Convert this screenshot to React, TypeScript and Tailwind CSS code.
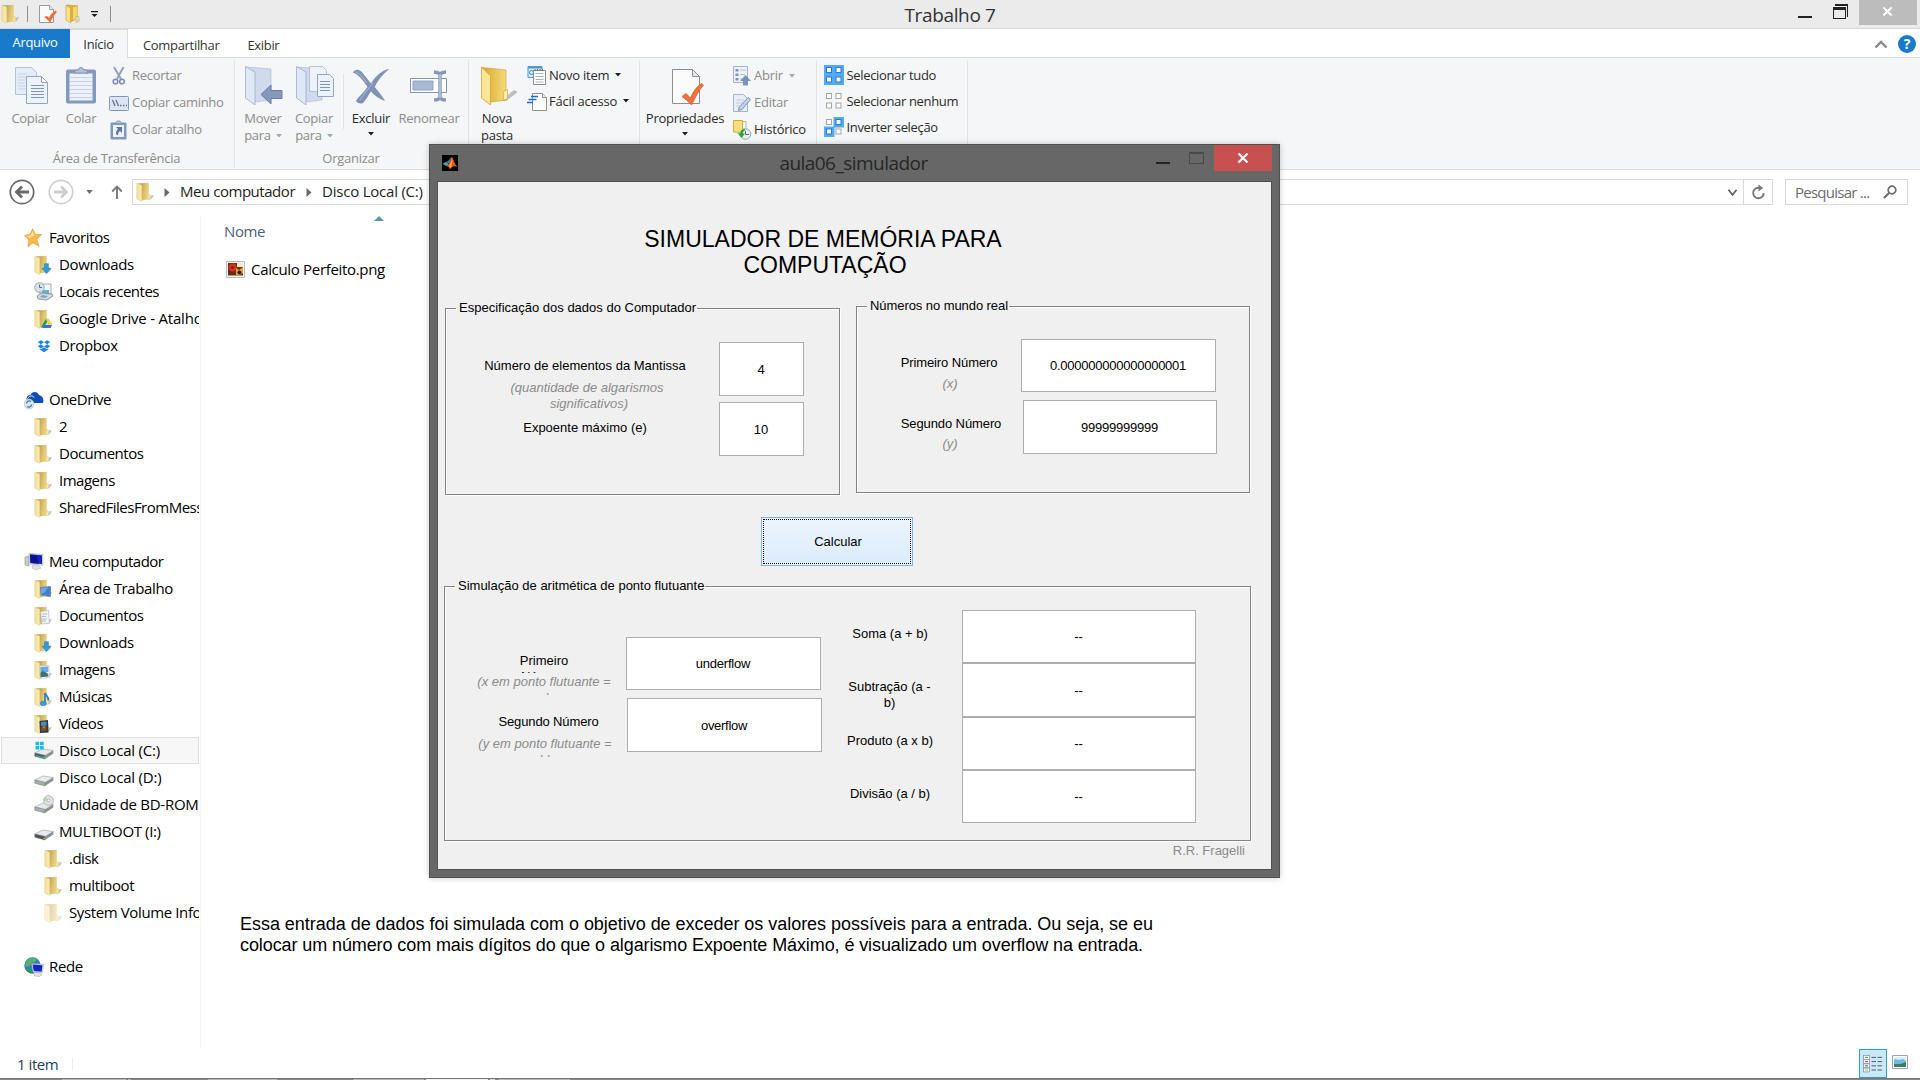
import React from "react";

type Kids = { children?: React.ReactNode };

/* ---------- icons ---------- */

function Folder({ className = "w-[18px] h-5", pale = false, children }: { className?: string; pale?: boolean } & Kids) {
  return (
    <svg viewBox="0 0 18 20" className={`shrink-0 ${className}`} opacity={pale ? 0.5 : 1}>
      <defs>
        <linearGradient id="fback" x1="0" x2="1" y1="0" y2="0.2">
          <stop offset="0.2" stopColor="#b8964a" />
          <stop offset="0.6" stopColor="#dcc072" />
          <stop offset="1" stopColor="#f0d987" />
        </linearGradient>
        <linearGradient id="ffront" x1="0" x2="1" y1="0" y2="0">
          <stop offset="0" stopColor="#f1e2a6" />
          <stop offset="1" stopColor="#faeba6" />
        </linearGradient>
      </defs>
      <path d="M12 18l4-5 2 .6-2.500 3.400z" fill="#a9a9a9" opacity="0.700" />
      <path d="M2 1.400l10.800-.6v11.600l1.600.6v4L6 18.400z" fill="url(#fback)" />
      <path d="M12.300 12.400l2.300.6v4l-2.800.8z" fill="#f7e8a4" stroke="#dcc372" strokeWidth="0.400" />
      <path d="M.8 1.200L5.800 3v16.400L.8 17z" fill="url(#ffront)" stroke="#dcc679" strokeWidth="0.500" />
      {children}
    </svg>
  );
}

const DownArrow = <path d="M9.400 9h4v4.400h2.400L11.400 19 7 13.400h2.400z" fill="#2f9be0" stroke="#1b76b8" strokeWidth="0.500" transform="translate(1 -.3)" />;

function NavIcon({ kind }: { kind: string }) {
  const c = "w-5 h-5 shrink-0";
  switch (kind) {
    case "star":
      return (
        <svg viewBox="0 0 20 20" className={c}>
          <path d="M8.600.8l2.600 5.600 6.400.2-4.800 4.600 2.200 7-6-3.400-5 4 .8-7L.6 7.400l5.600-1z" fill="#fcb84a" stroke="#e8952a" strokeWidth="0.700" />
          <path d="M8.600 2.600l1.600 5L6 10 2.600 8l4.200-.8z" fill="#fde3a0" />
        </svg>
      );
    case "recent":
      return (
        <svg viewBox="0 0 20 20" className={c}>
          <path d="M6 2h11v10H6z" fill="#f4f6f8" stroke="#a5adb5" />
          <path d="M8 8h7v4H8z" fill="#5fb0dc" />
          <path d="M3 14l5-3 10 1 1 2-6 4-9-1z" fill="#d5d8db" stroke="#80868c" strokeWidth="0.800" />
          <path d="M8 13l6 1-3 2-5-1z" fill="#77a9c6" />
          <circle cx="5.500" cy="5.500" r="4.800" fill="#d9e3eb" stroke="#93a1ad" strokeWidth="0.900" />
          <path d="M5.500 2.500v3h2.600" fill="none" stroke="#5e7386" />
        </svg>
      );
    case "gdrive":
      return (
        <Folder>
          <path d="M12 9.500l-5.200 9h3L14.400 11z" fill="#1da362" />
          <path d="M12 9.500h2.600l4 7H14z" fill="#ffcf48" />
          <path d="M8.200 18.900l1.700-2.800H18l-1.400 2.800z" fill="#3b6fe0" />
        </Folder>
      );
    case "dropbox":
      return (
        <svg viewBox="0 0 20 20" className={c}>
          <path d="M7 4.200l3 2-3.200 2L3.800 6zM13 4.200l-3 2 3.200 2 3-2.200zM3.800 10.200l3-2L10 10.400l-3 2zM16.200 10.200l-3-2-3.200 2.200 3 2zM10 11.200l3 2 1.300-.8v1.200L10 16.200l-4.300-2.600v-1.200l1.300.8z" fill="#1a82e2" />
        </svg>
      );
    case "onedrive":
      return (
        <svg viewBox="0 0 20 20" className={c}>
          <path d="M3 10C1.500 7 4 4.500 6.500 5 8 1 13.500 1 15 5c3 .5 5.500 4 4 8H8z" fill="#0f4fb4" />
          <path d="M3.500 8.500C6 5 9 5.500 10 7.500" fill="none" stroke="#fff" strokeWidth="1" />
          <circle cx="5" cy="14" r="4.900" fill="#dfe5ea" stroke="#a9b5c0" strokeWidth="0.600" />
          <path d="M2.500 13.500a2.800 2.800 0 0 1 4.500-2M7.600 14.500a2.800 2.800 0 0 1-4.500 2" fill="none" stroke="#2a7fc0" strokeWidth="1.300" />
        </svg>
      );
    case "computer":
      return (
        <svg viewBox="0 0 20 20" className={c}>
          <path d="M1 5l4-1v10l-4-1z" fill="#c5c9ce" stroke="#8a9097" strokeWidth="0.600" />
          <path d="M5 1.500l14 .8v11L5.500 12z" fill="#d8dde3" stroke="#a8aeb6" strokeWidth="0.600" />
          <path d="M6 2.600l12 .7v8.800L6.500 11z" fill="#1423c4" />
          <path d="M6 2.600l6 .3 3 8.900-8.500-.8z" fill="#0a138c" />
          <path d="M9 13h5l3 3-5 2-4-2z" fill="#dfe2e5" stroke="#a5aab0" strokeWidth="0.500" />
        </svg>
      );
    case "desktop":
      return (
        <Folder>
          <path d="M6.500 8.500L16.500 7.500v10l-9.500-1.500z" fill="#3f7fd0" stroke="#6d7f96" strokeWidth="0.800" />
          <path d="M7 9l7-.7-3 5-4 2z" fill="#6ba6ea" />
        </Folder>
      );
    case "docs":
      return (
        <Folder>
          <path d="M6.500 5.500l8-1 .8 13-7.500.5z" fill="#f1f3f6" stroke="#a9b0ba" strokeWidth="0.600" />
          <path d="M8 8h5M8 10.500h4M8 13h5M8 15h4" stroke="#8fa2bd" strokeWidth="0.700" />
        </Folder>
      );
    case "downloads":
      return <Folder>{DownArrow}</Folder>;
    case "images":
      return (
        <Folder>
          <path d="M5.500 6l9.500-.5.500 12-9 1z" fill="#f3f6f9" stroke="#b8bec6" strokeWidth="0.600" />
          <path d="M6.300 7l8-.4v5.400l-7.800 1z" fill="#62aee0" />
          <path d="M6.300 13.500c2-4 4-2 8 .5v2.500l-7.700.8z" fill="#3f6f72" />
        </Folder>
      );
    case "music":
      return (
        <Folder>
          <path d="M11 6c.5 2.500 4 3.500 3.500 7.500" fill="none" stroke="#2382cc" strokeWidth="1.800" />
          <path d="M11 6v10.500" stroke="#2382cc" strokeWidth="1.600" />
          <ellipse cx="9.300" cy="16.500" rx="3" ry="2.200" fill="#3f9be0" stroke="#1b6cae" strokeWidth="0.500" />
        </Folder>
      );
    case "videos":
      return (
        <Folder>
          <path d="M5.500 7l8.500-1 .5 12.500-8.500.5z" fill="#2d3a42" />
          <path d="M7 8l5.500-.4v4L7 12z" fill="#3f92c0" />
          <path d="M7 13l5.500-.5v4.500l-5.500.6z" fill="#7b4a35" />
          <circle cx="10" cy="13" r="1.500" fill="#c7692b" />
        </Folder>
      );
    case "network":
      return (
        <svg viewBox="0 0 20 20" className={c}>
          <circle cx="8.500" cy="8.500" r="8.200" fill="#2e7fbf" />
          <path d="M3 3c3-2.500 7-3 10-1l-2 3-4 1-1 3-4 1c-1-3-.5-5 1-7z" fill="#56b267" />
          <path d="M2 12l4-1 2 3-1 2.500c-2-.5-4-2-5-4.500z" fill="#2c9a58" />
          <path d="M7.500 6.500l12 .8-1 8.500L9 15z" fill="#d5dbe3" stroke="#9aa3ae" strokeWidth="0.500" />
          <path d="M8.600 7.600l9.800.7-.8 6.500L9.800 14z" fill="#1526be" />
          <path d="M10 15.500h4l4 2-3 2.200-5-1.200z" fill="#e1e4e7" stroke="#9ea4ab" strokeWidth="0.500" />
        </svg>
      );
    case "driveC":
    case "drive":
    case "bd":
    case "usb": {
      const dark = kind === "usb" || kind === "driveC";
      return (
        <svg viewBox="0 0 20 20" className={c}>
          <path d="M.8 12l8-4 10.500 1.500L11 14.500z" fill="#e8eaec" stroke="#9ba0a5" strokeWidth="0.600" />
          <path d="M.8 12L11 14.500V18L.8 15.200z" fill={dark ? "#4d5358" : "#a9adb1"} stroke="#74797e" strokeWidth="0.500" />
          <path d="M11 14.500l8.300-5v3L11 18z" fill="#8b9095" />
          {kind === "driveC" && <path d="M2 14l8 2v1.500l-8-2z" fill="#3a9cb0" />}
          <path d="M9.500 15.500l2 .3v1.500l-2-.4z" fill="#5fc832" />
          {kind === "driveC" && <path d="M1.500.7h3.700v3.500H1.500zM6 .7h3.700v3.500H6zM1.500 5h3.700v3.500H1.500zM6 5h3.700v3.500H6z" fill="#14bdf0" />}
          {kind === "bd" && (
            <g>
              <ellipse cx="14.500" cy="5.500" rx="5" ry="5" fill="#dfe1e3" stroke="#9da1a5" strokeWidth="0.600" />
              <path d="M14.500 5.500L11 2.200a5 5 0 0 0-1.200 4z" fill="#a5d89a" />
              <circle cx="14.500" cy="5.500" r="1.400" fill="#fff" stroke="#888" strokeWidth="0.500" />
            </g>
          )}
        </svg>
      );
    }
    default:
      return <Folder />;
  }
}

const S = "#93a5c4";
const F = "#e4ecf7";

function Caret({ light = false }: { light?: boolean }) {
  return (
    <svg viewBox="0 0 6 4" className="h-1 w-1.5 shrink-0">
      <path d="M0 0h6L3 3.400z" fill={light ? "#a8a8a8" : "#1e1e1e"} />
    </svg>
  );
}

function BigIcon({ kind }: { kind: string }) {
  const c = "h-10 w-10 shrink-0";
  switch (kind) {
    case "copy":
      return (
        <svg viewBox="0 0 40 40" className={c}>
          <g stroke={S} fill={F}>
            <path d="M4.500 2.500h16l5 5v22h-21z" stroke="#b5c3da" />
            <path d="M7 9h9M7 12h9M7 15h7M7 18h7M7 21h7M7 24h7" stroke="#c6d2e5" />
            <path d="M15.500 11.500h15l6 6v21h-21z" fill="#edf3fb" />
            <path d="M30.500 11.500v6h6z" fill="#fff" />
            <path d="M20 20.500h13M20 23.500h13M20 26.500h13M20 29.500h13M20 32.500h13" stroke="#8095bb" />
          </g>
        </svg>
      );
    case "paste":
      return (
        <svg viewBox="0 0 40 40" className={c}>
          <rect x="5" y="4.500" width="30" height="34" rx="2" fill="#8398bd" />
          <path d="M8.500 8.500h23v27h-23z" fill="#edf2fa" />
          <path d="M9 12.500h22M9 16.500h22M9 20.500h22M9 24.500h22M9 28.500h22M9 32.500h22" stroke="#c5d1e4" />
          <path d="M13 8l1.500-3h3a2.500 2.500 0 0 1 5 0h3L27 8z" fill="#b5c2d8" stroke="#7d91b5" />
        </svg>
      );
    case "move":
    case "copyto":
      return (
        <svg viewBox="0 0 40 40" className={c}>
          <path d="M3 2l25 2v31L12 37z" fill="#cfdbed" stroke="#afbed8" strokeWidth="0.700" />
          <path d="M2.500 1.500L12 7v33l-9.500-7z" fill="#dfe8f5" stroke={S} strokeWidth="0.700" />
          {kind === "move" ? (
            <path d="M18 29.500L28 20v5.500h11v8H28V39z" fill="#8699bd" stroke="#677ca3" />
          ) : (
            <g stroke={S} fill="#edf3fb">
              <path d="M15.500 1.500h13l4 4v21h-17z" stroke="#b5c3da" />
              <path d="M23.500 9.500h12l4 4v18h-16z" />
              <path d="M26 16.500h10M26 19.500h10M26 22.500h10M26 25.500h10" stroke="#8095bb" />
            </g>
          )}
        </svg>
      );
    case "delete":
      return (
        <svg viewBox="0 0 40 40" className={c}>
          <path d="M2 7.500C4 3.500 9 4 12 8.500l8 10c5-8 11-13.500 18.500-14.500-7 5.500-11 10.500-14.800 18C28 27 32 32 34 36c-6-2-10.500-5.500-14-9.500-3 4-4.500 8-8 11.500-2.500 1.500-6.500 0-7-2.500C8 31 13 27.500 16.500 22 13 17 9 10.500 2 7.500z" fill="#7f92b7" />
          <path d="M4 7c4 0 8 6 12 11M9 35c4-6 8-11 13-17" stroke="#a9b8d2" fill="none" />
        </svg>
      );
    case "rename":
      return (
        <svg viewBox="0 0 40 40" className={c}>
          <path d="M1.500 13.500h36v14h-36z" fill="#fff" stroke="#7f93b8" />
          <path d="M4 16h20v9H4z" fill="#a9b9d4" stroke="#8fa2c3" />
          <path d="M25 7c3 0 5 1 6 2 1-1 3-2 6-2M31 9v24M25 35c3 0 5-1 6-2 1 1 3 2 6 2" fill="none" stroke="#8497bb" strokeWidth="3.400" />
          <path d="M31 9v24" stroke="#d3deee" strokeWidth="1" />
        </svg>
      );
    case "newfolder":
      return (
        <svg viewBox="0 0 40 40" className={c}>
          <defs>
            <linearGradient id="nf" x1="0" x2="1">
              <stop offset="0" stopColor="#d8a92f" />
              <stop offset="1" stopColor="#f6dc7c" />
            </linearGradient>
          </defs>
          <path d="M24 36L37 25l4 2-12 9z" fill="#9a9a9a" opacity="0.600" />
          <path d="M5 2.500L29 5v22l1 1v7L14 37z" fill="url(#nf)" stroke="#c99a2c" strokeWidth="0.600" />
          <path d="M26.500 26.500l4-2v9.500l-4 1z" fill="#fbeab0" stroke="#d1a63a" strokeWidth="0.600" />
          <path d="M4.500 2L13.500 11v29L4.500 33z" fill="#fae598" stroke="#d0a53a" strokeWidth="0.800" />
        </svg>
      );
    default:
      return (
        <svg viewBox="0 0 40 40" className={c}>
          <path d="M7.500 4.500h20l7 7v27h-27z" fill="#fbfbfb" stroke="#8d8d8d" />
          <path d="M27.500 4.500v7h7z" fill="#e8e8e8" stroke="#8d8d8d" />
          <path d="M17 31.500l4-3 4.500 4.500C28 27 31 22 36.500 18.500l2 1.500C34 25.500 30.500 32 26.500 40 24 37 20 34 17 31.500z" fill="#f0713c" stroke="#d4572a" strokeWidth="0.700" />
        </svg>
      );
  }
}

function SmallIcon({ kind }: { kind: string }) {
  const c = "h-5 w-5 shrink-0";
  switch (kind) {
    case "cut":
      return (
        <svg viewBox="0 0 20 20" className={c}>
          <path d="M5 1l7 12M14.500 1L8 13" stroke="#93a3bf" strokeWidth="2" />
          <circle cx="6.500" cy="15.500" r="2.300" fill="none" stroke="#7b8fb3" strokeWidth="1.600" />
          <circle cx="13" cy="15.500" r="2.300" fill="none" stroke="#7b8fb3" strokeWidth="1.600" />
        </svg>
      );
    case "path":
      return (
        <svg viewBox="0 0 20 20" className={c}>
          <rect x="0.500" y="3.500" width="19" height="14" rx="1" fill="#dbe5f3" stroke="#8297bd" />
          <path d="M3.500 7l2.500 6M7 7l2.500 6" stroke="#5e739b" strokeWidth="1.300" />
          <path d="M11 12.500h1.500M14 12.500h1.500M17 12.500h1" stroke="#5e739b" strokeWidth="1.500" />
        </svg>
      );
    case "shortcut":
      return (
        <svg viewBox="0 0 20 20" className={c}>
          <rect x="1.500" y="2.500" width="16" height="17" rx="1" fill="#8297bd" />
          <path d="M4 5h11v12H4z" fill="#eef3fa" />
          <path d="M6 3.500l2-2.500h3l2 2.500z" fill="#b9c6dc" stroke="#7c90b4" strokeWidth="0.700" />
          <path d="M7 7h6v6l-2-2c-1.500 1-2 2.500-2 4.500L7 14c0-2 .5-3.500 2-5z" fill="#5f759f" />
        </svg>
      );
    case "newitem":
      return (
        <svg viewBox="0 0 20 20" className={c}>
          <path d="M1 1.500h14v11H1z" fill="#d7ecfa" stroke="#4a9ad4" />
          <path d="M1 1h14v2.500H1z" fill="#4a9ad4" />
          <circle cx="4.500" cy="7.500" r="2" fill="none" stroke="#3b8ac6" />
          <path d="M6.500 5.500h12v14h-12z" fill="#fff" stroke="#8c8c8c" />
          <path d="M8.500 8.500h8M8.500 11.500h8M8.500 14.500h8M8.500 17h8" stroke="#a9b4c0" />
          <path d="M8 4v2M10.500 4v2M13 4v2M15.500 4v2" stroke="#666" />
        </svg>
      );
    case "easy":
      return (
        <svg viewBox="0 0 20 20" className={c}>
          <path d="M5.500 2.500h10l4 4v13h-14z" fill="#fff" stroke="#8f8f8f" />
          <path d="M15.500 2.500v4h4" fill="#eee" stroke="#8f8f8f" />
          <path d="M4 5.500h7M1.500 8.500h8M0 11.500h6" stroke="#1f6fc8" strokeWidth="1.300" />
        </svg>
      );
    case "open":
      return (
        <svg viewBox="0 0 20 20" className={c}>
          <path d="M.5.500h14v16H.5z" fill="#eef3fa" stroke="#a3b3cf" />
          <path d="M2.500 3h3v2.500h-3zM2.500 7.500h3V10h-3zM2.500 12h3v2.500h-3z" fill="#7c91b8" />
          <path d="M7 4h6M7 8.500h5M7 13h2" stroke="#b3c0d6" />
          <path d="M12.500 9l5.500 6h-3v4.500h-5V15H7z" fill="#7c91b8" />
        </svg>
      );
    case "edit":
      return (
        <svg viewBox="0 0 20 20" className={c}>
          <path d="M.5 1.500h10l4 4v13H.5z" fill="#e6eef8" stroke="#a3b3cf" />
          <path d="M3 7h8M3 10h7M3 13h4" stroke="#c1cde0" />
          <path d="M6 14.500L15 4.500l2.500 2L9 16.500l-3.500.8z" fill="#c5d2e7" stroke="#7f94ba" />
        </svg>
      );
    case "history":
      return (
        <svg viewBox="0 0 20 20" className={c}>
          <path d="M5 1.500h8v12H5z" fill="#f7f7f7" stroke="#b5b5b5" />
          <path d="M.5.500h9v9l-2 3-7-.5z" fill="#f8df7c" stroke="#d2aa3e" />
          <circle cx="12.500" cy="14" r="5.300" fill="#e9eef2" stroke="#9aa7b2" />
          <path d="M12.500 11v3.500H16" fill="none" stroke="#5d6c79" />
          <path d="M12 9c-3 0-4.500 2-4.500 4.500H5L8.500 18l3.500-4.500H9.800c0-1.500.7-2.500 2.200-3z" fill="#22ac2c" />
        </svg>
      );
    default: {
      const all = kind === "selall";
      const on = (i: number) => all || (kind === "selinv" && (i === 1 || i === 2));
      return (
        <svg viewBox="0 0 20 20" className={c}>
          {all && <path d="M0 0h20v20H0z" fill="#55aaf8" />}
          {[0, 1, 2, 3].map((i) => {
            const x = (i % 2) * 9.5;
            const y = Math.floor(i / 2) * 9.5;
            return (
              <g key={i}>
                {on(i) && <path d={`M${x} ${y}h10.500v10.500h-10.500z`} fill="#55aaf8" />}
                <rect x={x + 2.5} y={y + 2.5} width="5" height="5" fill="#fff" stroke={on(i) ? "#2a7bc8" : "#a3a3a3"} />
              </g>
            );
          })}
        </svg>
      );
    }
  }
}

/* ---------- explorer ---------- */

function BigButton({ icon, lines, width, caret, off }: { icon: string; lines: string[]; width: string; caret?: "inline" | "below"; off?: boolean }) {
  return (
    <div className={`flex shrink-0 flex-col items-center pt-[5px] leading-[17px] ${width} ${off ? "text-[#8b8b8b]" : "text-[#2b2b2b]"}`}>
      <BigIcon kind={icon} />
      <div className="mt-[5px] whitespace-nowrap">{lines[0]}</div>
      {lines[1] && (
        <div className="flex items-center gap-[5px]">
          {lines[1]}
          {caret === "inline" && <Caret light={off} />}
        </div>
      )}
      {caret === "below" && <div className="mt-[5px]"><Caret /></div>}
    </div>
  );
}

function SmallRows({ rows, className }: { rows: { icon: string; label: string; off?: boolean; caret?: boolean }[]; className: string }) {
  return (
    <div className={`flex shrink-0 flex-col ${className}`}>
      {rows.map((r) => (
        <div key={r.label} className={`flex flex-1 items-center whitespace-nowrap ${r.off ? "text-[#8b8b8b]" : "text-[#2b2b2b]"}`}>
          <SmallIcon kind={r.icon} />
          <span className="pt-px">{r.label}</span>
          {r.caret && <span className="ml-[6px] flex"><Caret light={r.off} /></span>}
        </div>
      ))}
    </div>
  );
}

function Group({ width, label, children }: { width: string; label?: string } & Kids) {
  return (
    <div className={`flex h-[108px] shrink-0 flex-col border-r border-[#e2e3e4] ${width}`}>
      <div className="flex h-[90px]">{children}</div>
      <div className="mt-px pr-px text-center leading-[14px] text-[#8b8b8b]">{label}</div>
    </div>
  );
}

function Ribbon() {
  return (
    <div className="flex h-[112px] shrink-0 border-b border-[#dadbdc] bg-[#f5f6f7] pt-[2px] text-[13px] tracking-[-0.26px]">
      <Group width="w-[235px]" label="Área de Transferência">
        <BigButton icon="copy" lines={["Copiar"]} width="ml-1 w-[53px]" off />
        <BigButton icon="paste" lines={["Colar"]} width="w-[48px]" off />
        <SmallRows
          className="ml-1 mt-[2px] h-[81px] gap-0 [&_span]:ml-[3px] tracking-[-0.3px]"
          rows={[
            { icon: "cut", label: "Recortar", off: true },
            { icon: "path", label: "Copiar caminho", off: true },
            { icon: "shortcut", label: "Colar atalho", off: true },
          ]}
        />
      </Group>
      <Group width="w-[234px]" label="Organizar">
        <BigButton icon="move" lines={["Mover", "para"]} width="ml-px w-[54px]" caret="inline" off />
        <BigButton icon="copyto" lines={["Copiar", "para"]} width="w-[48px]" caret="inline" off />
        <div className="ml-[5px] mr-[2px] mt-[14px] h-[55px] w-px shrink-0 bg-[#e2e3e4]" />
        <BigButton icon="delete" lines={["Excluir"]} width="w-[50px]" caret="below" />
        <BigButton icon="rename" lines={["Renomear"]} width="w-[66px]" off />
      </Group>
      <Group width="w-[171px]">
        <BigButton icon="newfolder" lines={["Nova", "pasta"]} width="w-[56px]" />
        <SmallRows
          className="ml-[2px] mt-[2px] h-[52px] [&_span:nth-of-type(1)]:ml-[2px]"
          rows={[
            { icon: "newitem", label: "Novo item", caret: true },
            { icon: "easy", label: "Fácil acesso", caret: true },
          ]}
        />
      </Group>
      <Group width="w-[177px]">
        <BigButton icon="props" lines={["Propriedades"]} width="w-[90px]" caret="below" />
        <SmallRows
          className="ml-[3px] mt-[2px] h-[81px] [&_span:nth-of-type(1)]:ml-px"
          rows={[
            { icon: "open", label: "Abrir", off: true, caret: true },
            { icon: "edit", label: "Editar", off: true },
            { icon: "history", label: "Histórico" },
          ]}
        />
      </Group>
      <Group width="w-[151px]">
        <SmallRows
          className="ml-[7px] mt-[2px] h-[78px] tracking-[-0.34px] [&_span]:ml-[2.5px]"
          rows={[
            { icon: "selall", label: "Selecionar tudo" },
            { icon: "selnone", label: "Selecionar nenhum" },
            { icon: "selinv", label: "Inverter seleção" },
          ]}
        />
      </Group>
    </div>
  );
}

function TitleBar() {
  return (
    <div className="grid h-[29px] shrink-0 grid-cols-3 border-b border-[#d8d8d8] bg-[#ebebeb]">
      <div className="flex items-center">
        <Folder className="ml-px h-5 w-[18px]" />
        <div className="ml-2 h-4 w-px bg-[#8f8f8f]" />
        <svg viewBox="0 0 20 20" className="ml-[10px] h-5 w-5">
          <path d="M1.500 1.500h10l4 4v13h-14z" fill="#fafafa" stroke="#9a9a9a" />
          <path d="M11.500 1.500v4h4" fill="#eee" stroke="#9a9a9a" />
          <path d="M6 13l3-1 2 2c1-3 3.500-6 6.500-7.500L19 8c-3 3-5 6.500-7 11-1.500-2.500-3.500-4.500-6-6z" fill="#f06f38" />
        </svg>
        <svg viewBox="0 0 18 20" className="ml-[7px] h-5 w-[18px]">
          <path d="M1.500 1l11 .8v13l-7 3z" fill="#dfae36" stroke="#c89a2c" strokeWidth="0.600" />
          <path d="M8 3l4.500-.5v12L8 16z" fill="#f4d66c" />
          <path d="M1 1l4.500 3.500v14.500L1 16z" fill="#f9e28c" stroke="#cfa435" strokeWidth="0.700" />
          <path d="M11 12.500h3v5l-3 1z" fill="#bfe3f4" stroke="#e0b94c" strokeWidth="0.700" />
        </svg>
        <svg viewBox="0 0 8 7" className="ml-[8px] h-[7px] w-2">
          <path d="M0 0h7v1.200H0zM.5 3h6l-3 3z" fill="#1a1a1a" />
        </svg>
        <div className="ml-[11px] h-4 w-px bg-[#8f8f8f]" />
      </div>
      <div className="flex justify-center pt-[2px] pr-[20px] text-[19px] leading-[26px] tracking-[-0.35px] text-[#333]">Trabalho 7</div>
      <div className="flex items-start justify-end pr-[3px]">
        <svg viewBox="0 0 52 26" className="mr-[9px] h-[26px] w-[52px]" shapeRendering="crispEdges">
          <path d="M0 16h14v2H0z" fill="#222" />
          <path d="M37 4h13v13h-1V6H37z" fill="#222" />
          <path d="M35.500 7.500h12v11h-12z" fill="#ebebeb" stroke="#222" />
          <path d="M35 7h13v3H35z" fill="#222" />
        </svg>
        <div className="flex h-[25px] w-[58px] items-center justify-center bg-[#bcbcbc] pb-[2px] pr-px">
          <svg viewBox="0 0 12 10" className="h-[9px] w-[11px]">
            <path d="M1.500.5l9 9M10.500.5l-9 9" stroke="#fff" strokeWidth="2.200" />
          </svg>
        </div>
      </div>
    </div>
  );
}

function Tabs() {
  return (
    <div className="flex h-[29px] shrink-0 items-stretch bg-white text-[13px] tracking-[-0.32px] text-[#333]">
      <div className="flex w-[70px] items-center justify-center bg-[#1979ca] pb-px text-white">Arquivo</div>
      <div className="flex w-[58px] items-center justify-center border-r border-t border-[#dadbdc] bg-[#f5f6f7] pt-[2px]">Início</div>
      <div className="flex flex-1 items-center border-b border-[#dadbdc] pt-[2px]">
        <span className="ml-[15px] pt-[3px]">Compartilhar</span>
        <span className="ml-[28px] pt-[3px]">Exibir</span>
        <svg viewBox="0 0 14 10" className="ml-auto mr-[10px] h-[10px] w-[14px]">
          <path d="M1.500 8.500L7 3l5.500 5.500" fill="none" stroke="#8a8a8a" strokeWidth="2.400" />
        </svg>
        <div className="mr-[4px] flex h-[18px] w-[18px] items-center justify-center rounded-full bg-[#1979ca] text-[14px] font-bold leading-none text-white">?</div>
      </div>
    </div>
  );
}

function Tri() {
  return (
    <svg viewBox="0 0 6 9" className="h-[9px] w-[6px] shrink-0">
      <path d="M.5 0v9L5.500 4.500z" fill="#6a6a6a" />
    </svg>
  );
}

function RoundArrow({ dim = false }: { dim?: boolean }) {
  const k = dim ? "#cfcfcf" : "#6a6a6a";
  return (
    <svg viewBox="0 0 26 26" className={`h-[26px] w-[26px] shrink-0 ${dim ? "-scale-x-100" : ""}`}>
      <circle cx="13" cy="13" r="11.700" fill="#fff" stroke={k} strokeWidth="1.700" />
      <path d="M20 13H8M13 7.500L7.500 13l5.500 5.500" fill="none" stroke={k} strokeWidth="2.800" />
    </svg>
  );
}

function AddressBar() {
  return (
    <div className="mb-px flex h-[44px] shrink-0 items-center bg-white text-[15px] tracking-[-0.38px] text-[#1e1e1e]">
      <div className="ml-[9px] flex"><RoundArrow /></div>
      <div className="ml-[13px] flex"><RoundArrow dim /></div>
      <svg viewBox="0 0 8 5" className="ml-[12px] h-[4px] w-[7px]"><path d="M0 0h8L4 5z" fill="#6f6f6f" /></svg>
      <svg viewBox="0 0 12 14" className="ml-[18px] h-[14px] w-[12px]">
        <path d="M6 14V2M1.200 6.500L6 1.700l4.800 4.800" fill="none" stroke="#777" strokeWidth="1.900" />
      </svg>
      <div className="ml-[9px] flex h-[26px] w-[1641px] items-center border border-[#d9d9d9]">
        <Folder className="ml-[3px] h-5 w-[18px]" />
        <span className="ml-[10px] flex"><Tri /></span>
        <span className="ml-[10px] pb-px leading-[23px] tracking-[-0.46px]">Meu computador</span>
        <span className="ml-[11px] flex"><Tri /></span>
        <span className="ml-[10px] pb-px leading-[23px] tracking-[-0.22px]">Disco Local (C:)</span>
        <svg viewBox="0 0 12 10" className="ml-auto mr-[5px] h-[9px] w-[11px]">
          <path d="M1.500 2L6 7.500 10.500 2" fill="none" stroke="#666" strokeWidth="2" />
        </svg>
        <div className="flex h-full w-[29px] items-center justify-center border-l border-[#d9d9d9]">
          <svg viewBox="0 0 16 18" className="h-[17px] w-[15px]">
            <path d="M9.500 4.200A5.600 5.600 0 1 0 13.500 9.500" fill="none" stroke="#777" strokeWidth="2" />
            <path d="M8 .5l5 3.600-5 3.800z" fill="#777" />
          </svg>
        </div>
      </div>
      <div className="ml-3 flex h-[26px] w-[123px] items-center border border-[#d9d9d9] text-[#6d6d6d]">
        <span className="ml-[9px] leading-[23px] tracking-[-0.75px]">Pesquisar ...</span>
        <svg viewBox="0 0 14 14" className="ml-auto mr-[10px] h-[14px] w-[14px]">
          <circle cx="9" cy="5" r="3.800" fill="none" stroke="#6d6d6d" strokeWidth="1.700" />
          <path d="M6.200 7.800L1 13" stroke="#6d6d6d" strokeWidth="2.200" />
        </svg>
      </div>
    </div>
  );
}

type Item = { icon: string; label: string; level: 0 | 1 | 2; selected?: boolean; pale?: boolean; track?: string } | null;

const wide = "tracking-[-0.2px]";
const tight = "tracking-[-0.5px]";

const tree: Item[] = [
  { icon: "star", label: "Favoritos", level: 0 },
  { icon: "downloads", label: "Downloads", level: 1 },
  { icon: "recent", label: "Locais recentes", level: 1, track: tight },
  { icon: "gdrive", label: "Google Drive - Atalho", level: 1, track: wide },
  { icon: "dropbox", label: "Dropbox", level: 1 },
  null,
  { icon: "onedrive", label: "OneDrive", level: 0, track: tight },
  { icon: "folder", label: "2", level: 1 },
  { icon: "folder", label: "Documentos", level: 1, track: tight },
  { icon: "folder", label: "Imagens", level: 1, track: tight },
  { icon: "folder", label: "SharedFilesFromMessenger", level: 1, track: tight },
  null,
  { icon: "computer", label: "Meu computador", level: 0, track: tight },
  { icon: "desktop", label: "Área de Trabalho", level: 1 },
  { icon: "docs", label: "Documentos", level: 1, track: tight },
  { icon: "downloads", label: "Downloads", level: 1 },
  { icon: "images", label: "Imagens", level: 1, track: tight },
  { icon: "music", label: "Músicas", level: 1, track: tight },
  { icon: "videos", label: "Vídeos", level: 1 },
  { icon: "driveC", label: "Disco Local (C:)", level: 1, selected: true, track: wide },
  { icon: "drive", label: "Disco Local (D:)", level: 1, track: wide },
  { icon: "bd", label: "Unidade de BD-ROM", level: 1, track: "tracking-[-0.28px]" },
  { icon: "usb", label: "MULTIBOOT (I:)", level: 1 },
  { icon: "folder", label: ".disk", level: 2, track: tight },
  { icon: "folder", label: "multiboot", level: 2 },
  { icon: "folder", label: "System Volume Information", level: 2, pale: true },
  null,
  { icon: "network", label: "Rede", level: 0 },
];

const indent = { 0: "pl-[23px]", 1: "pl-[33px]", 2: "pl-[43px]" };

function Sidebar() {
  return (
    <div className="flex w-[201px] shrink-0 flex-col border-r border-[#f3f3f3] pr-px pt-[9px] text-[15px] tracking-[-0.38px] text-black">
      {tree.map((it, i) =>
        it ? (
          <div
            key={i}
            className={`ml-px flex h-[27px] w-[198px] shrink-0 items-center overflow-hidden whitespace-nowrap leading-[27px] ${indent[it.level]} ${
              it.selected ? "bg-[#f7f7f7] outline outline-1 -outline-offset-1 outline-[#dedede]" : ""
            }`}
          >
            <span className={`flex w-[25px] shrink-0 ${it.pale ? "opacity-50" : ""}`}><NavIcon kind={it.icon} /></span>
            <span className={`whitespace-pre ${it.track ?? ""}`}>{it.label}</span>
          </div>
        ) : (
          <div key={i} className="h-[27px] shrink-0" />
        )
      )}
    </div>
  );
}

function FileArea() {
  return (
    <div className="flex flex-1 flex-col pl-[23px] text-[15px]">
      <div className="flex h-[6px] items-end pl-[150px]">
        <svg viewBox="0 0 10 5" className="h-[5px] w-[10px]"><path d="M5 0l5 5H0z" fill="#5f93b4" /></svg>
      </div>
      <div className="h-[22px] leading-[21px] tracking-[-0.38px] text-[#4c607a]">Nome</div>
      <div className="mt-[13px] flex h-[27px] items-center tracking-[-0.32px] text-black">
        <svg viewBox="0 0 19 17" className="ml-[2px] h-[17px] w-[19px]">
          <path d="M.5.500h18v16H.5z" fill="#f3f3f3" stroke="#b9bcc0" />
          <path d="M2 2h15v12.500H2z" fill="#6b2f18" />
          <path d="M11 2h6v4h-6z" fill="#f3e7d0" />
          <circle cx="6.500" cy="6.500" r="4" fill="#d43120" />
          <circle cx="6.500" cy="6.500" r="1.300" fill="#7a1a12" />
          <path d="M10 7l3 2 4-3v6l-3 2h-4z" fill="#e9a52c" />
          <circle cx="13.500" cy="11.500" r="2" fill="#2a1a10" />
        </svg>
        <span className="ml-[6px]">Calculo Perfeito.png</span>
      </div>
      <div className="mt-[631px] pl-[16px] font-['Liberation_Sans',sans-serif] text-[18px] leading-[21px] text-black">
        <div className="tracking-[-0.032px]">
          Essa entrada de dados foi simulada com o objetivo de exceder os valores possíveis para a entrada. Ou seja, se eu
        </div>
        <div className="tracking-[-0.097px]">
          colocar um número com mais dígitos do que o algarismo Expoente Máximo, é visualizado um overflow na entrada.
        </div>
      </div>
    </div>
  );
}

function StatusBar() {
  return (
    <div className="flex h-[29px] shrink-0 items-stretch text-[15px] tracking-[-0.45px] text-[#233f63]">
      <div className="flex w-[72px] items-center pl-[17px] pb-px pt-[3px]">1 item</div>
      <div className="mt-[9px] h-[13px] w-px bg-[#ececec]" />
      <div className="ml-auto flex w-[28px] items-center justify-center border border-[#2a9fdc] bg-[#cbe8f6]">
        <svg viewBox="0 0 20 18" className="h-[18px] w-5">
          {["#4fa560", "#d9413c", "#3f77d8", "#a4cf30"].map((k, i) => (
            <g key={k}>
              <rect x="0.500" y={0.5 + i * 4.2} width="6" height="3.800" fill="#fff" stroke="#8b93a3" strokeWidth="0.800" />
              <path d={`M2 ${2.4 + i * 4.2}h3`} stroke={k} strokeWidth="1.200" />
              <path d={`M8.500 ${2.4 + i * 4.2}h4.500M14.500 ${2.4 + i * 4.2}h4.500`} stroke="#4e5a75" strokeWidth="1" />
            </g>
          ))}
        </svg>
      </div>
      <div className="ml-[5px] mr-[12px] flex items-center pb-[3px]">
        <svg viewBox="0 0 16 14" className="h-[14px] w-4">
          <path d="M.5.500h15v13H.5z" fill="#fff" stroke="#9aa3b8" />
          <path d="M2 2h12v10H2z" fill="#6fb9ee" />
          <path d="M2 4l5 1 4-1 3 2v-4H2z" fill="#d9effb" />
          <path d="M2 9c3 0 6 1 12-2v5H2z" fill="#3c7d5c" />
        </svg>
      </div>
    </div>
  );
}

function TaskbarEdge() {
  return (
    <div className="flex h-[2px] shrink-0 border-t border-[#787576] bg-[#8b8889]">
      <div className="ml-[62px] w-[64px] bg-[#b9b7b8]" />
      <div className="ml-[2px] w-[3px] bg-[#b9b7b8]" />
      <div className="ml-[77px] w-[69px] bg-[#b9b7b8]" />
      <div className="ml-[76px] w-[71px] bg-[#b9b7b8]" />
      <div className="ml-[2px] w-[62px] bg-[#f0f0f0]" />
      <div className="ml-[2px] w-[5px] bg-[#dcdcdc]" />
      <div className="ml-[4px] w-[71px] bg-[#b9b7b8]" />
    </div>
  );
}

/* ---------- simulator dialog ---------- */

function Panel({ title, className, children }: { title: string; className: string } & Kids) {
  return (
    <div className={`relative flex items-start border border-[#838383] shadow-[1px_1px_0_#fff,inset_1px_1px_0_#fff] ${className}`}>
      <span className="absolute -top-[9px] left-[10px] whitespace-nowrap bg-[#f0f0f0] pl-[3px] pr-px leading-4">{title}</span>
      {children}
    </div>
  );
}

function Field({ className, children }: { className: string } & Kids) {
  return (
    <div className={`flex shrink-0 items-center justify-center border border-[#abadb3] bg-white pr-px pt-px leading-4 ${className}`}>{children}</div>
  );
}

const hint = "italic text-[#8b8b8b]";

function Simulator() {
  return (
    <div className="absolute left-[429px] top-[144px] flex h-[734px] w-[851px] flex-col border border-[#505050] bg-[#676767] shadow-[0_0_6px_rgba(0,0,0,0.22)]">
      <div className="grid h-[36px] shrink-0 grid-cols-[1fr_auto_1fr]">
        <svg viewBox="0 0 16 16" className="ml-[12px] mt-[10px] h-4 w-4">
          <path d="M0 0h16v16H0z" fill="#000" />
          <path d="M.5 8.800l4-2L7 9.500 4 11z" fill="#3fa5c4" />
          <path d="M4.500 6.800C7 6 8 3 9.500 2L7.500 9z" fill="#2e7f9e" />
          <path d="M9.700 1.800C11 3 12.500 9 15.600 12.500 12 10 10.500 11.500 8 14.300 7 12 6 11.500 4.200 11 7 10 8.500 5 9.700 1.800z" fill="#e5551b" />
          <path d="M10 2.500c.6 3 .8 6-1.500 10.500-.8-1-1-1.500-1.500-2C8.500 9 9.500 6 10 2.500z" fill="#f9b233" />
        </svg>
        <div className="pr-[2px] pt-[5px] text-[19px] leading-[26px] tracking-[-0.54px] text-[#262626]">aula06_simulador</div>
        <div className="flex items-start justify-end pr-[7px]">
          <svg viewBox="0 0 49 26" className="mr-[9px] h-[26px] w-[49px]" shapeRendering="crispEdges">
            <path d="M0 17h14v2H0z" fill="#222" />
            <path d="M33.500 8.500h14v10h-14z" fill="none" stroke="#4a4a4a" />
            <path d="M33 7h15v2H33z" fill="#4a4a4a" />
          </svg>
          <div className="flex h-[26px] w-[58px] items-center justify-center bg-[#c75050] pb-px pr-px">
            <svg viewBox="0 0 12 10" className="h-[10px] w-3">
              <path d="M1.500.5l9 9M10.500.5l-9 9" stroke="#fff" strokeWidth="2.200" />
            </svg>
          </div>
        </div>
      </div>

      <div className="ml-[7px] flex h-[689px] w-[835px] flex-col border border-[#505050] bg-[#f0f0f0] font-['Liberation_Sans',sans-serif] text-[13px] leading-4 text-black">
        <div className="mt-[44px] pr-[63px] text-center text-[23px] leading-[26px]">
          <div>SIMULADOR DE MEMÓRIA PARA</div>
          <div className="pl-[4px]">COMPUTAÇÃO</div>
        </div>

        <div className="mt-[28px] flex shrink-0 items-start">
          <Panel title="Especificação dos dados do Computador" className="ml-[7px] mt-[2px] h-[187px] w-[395px]">
            <div className="ml-[5px] mt-[49px] flex w-[268px] flex-col text-center">
              <div>Número de elementos da Mantissa</div>
              <div className={`mt-[6px] pl-[4px] ${hint}`}>(quantidade de algarismos</div>
              <div className={`pl-[8px] ${hint}`}>significativos)</div>
              <div className="mt-[8px]">Expoente máximo (e)</div>
            </div>
            <div className="mt-[33px] flex flex-col gap-[6px]">
              <Field className="h-[54px] w-[85px]">4</Field>
              <Field className="h-[54px] w-[85px]">10</Field>
            </div>
          </Panel>
          <Panel title="Números no mundo real" className="ml-[16px] h-[187px] w-[394px] [&>span]:tracking-[-0.07px]">
            <div className="ml-[20px] mt-[48px] flex w-[144px] flex-col text-center tracking-[-0.1px]">
              <div>Primeiro Número</div>
              <div className={`mt-[5px] pl-[2px] ${hint}`}>(x)</div>
              <div className="mt-[24px] pl-[4px]">Segundo Número</div>
              <div className={`mt-[4px] pl-[2px] ${hint}`}>(y)</div>
            </div>
            <div className="mt-[32px] flex flex-col gap-[8px] tracking-[-0.24px]">
              <Field className="h-[53px] w-[195px]">0.000000000000000001</Field>
              <Field className="ml-[2px] h-[54px] w-[194px]">99999999999</Field>
            </div>
          </Panel>
        </div>

        <div className="ml-[323px] mt-[22px] flex h-[49px] w-[152px] shrink-0 border border-[#7eb4ea] bg-[#ecf4fc] p-px">
          <div className="flex flex-1 items-center justify-center border border-dotted border-black bg-gradient-to-b from-[#ecf4fc] to-[#dcecfc] pl-[2px]">Calcular</div>
        </div>

        <Panel title="Simulação de aritmética de ponto flutuante" className="ml-[6px] mt-[20px] h-[255px] w-[807px] shrink-0">
          <div className="mt-[66px] flex w-[181px] flex-col pl-[17px] text-center">
            <div className="h-[20px] overflow-hidden px-[40px]">Primeiro Número</div>
            <div className={`mt-px h-[21px] overflow-hidden px-[12px] ${hint}`}>(x em ponto flutuante = a)</div>
            <div className="mt-[19px] pl-[9px] tracking-[-0.13px]">Segundo Número</div>
            <div className={`mt-[6px] h-[21px] overflow-hidden pl-[13px] pr-[11px] ${hint}`}>(y em ponto flutuante = b)</div>
          </div>
          <div className="mt-[50px] flex flex-col gap-[8px]">
            <Field className="h-[53px] w-[195px] tracking-[-0.2px]">underflow</Field>
            <Field className="ml-px h-[54px] w-[195px] tracking-[-0.3px]">overflow</Field>
          </div>
          <div className="ml-[24px] mt-[39px] w-[88px] text-center">
            <div>Soma (a + b)</div>
            <div className="mt-[37px] pr-px">Subtração (a -<br />b)</div>
            <div className="mt-[22px]">Produto (a x b)</div>
            <div className="mt-[37px]">Divisão (a / b)</div>
          </div>
          <div className="ml-[28px] mt-[23px] flex flex-col">
            <Field className="h-[53px] w-[234px]">--</Field>
            <Field className="h-[54px] w-[234px]">--</Field>
            <Field className="h-[53px] w-[234px]">--</Field>
            <Field className="h-[53px] w-[234px]">--</Field>
          </div>
        </Panel>

        <div className="mt-[2px] pr-[26px] text-right text-[#8b8b8b]">R.R. Fragelli</div>
      </div>
    </div>
  );
}

export default function App() {
  return (
    <div className="relative flex h-[1080px] w-[1920px] flex-col overflow-hidden bg-white font-['Open_Sans','Noto_Sans',sans-serif]">
      <TitleBar />
      <Tabs />
      <Ribbon />
      <AddressBar />
      <div className="flex min-h-0 flex-1">
        <Sidebar />
        <FileArea />
      </div>
      <StatusBar />
      <TaskbarEdge />
      <Simulator />
    </div>
  );
}
